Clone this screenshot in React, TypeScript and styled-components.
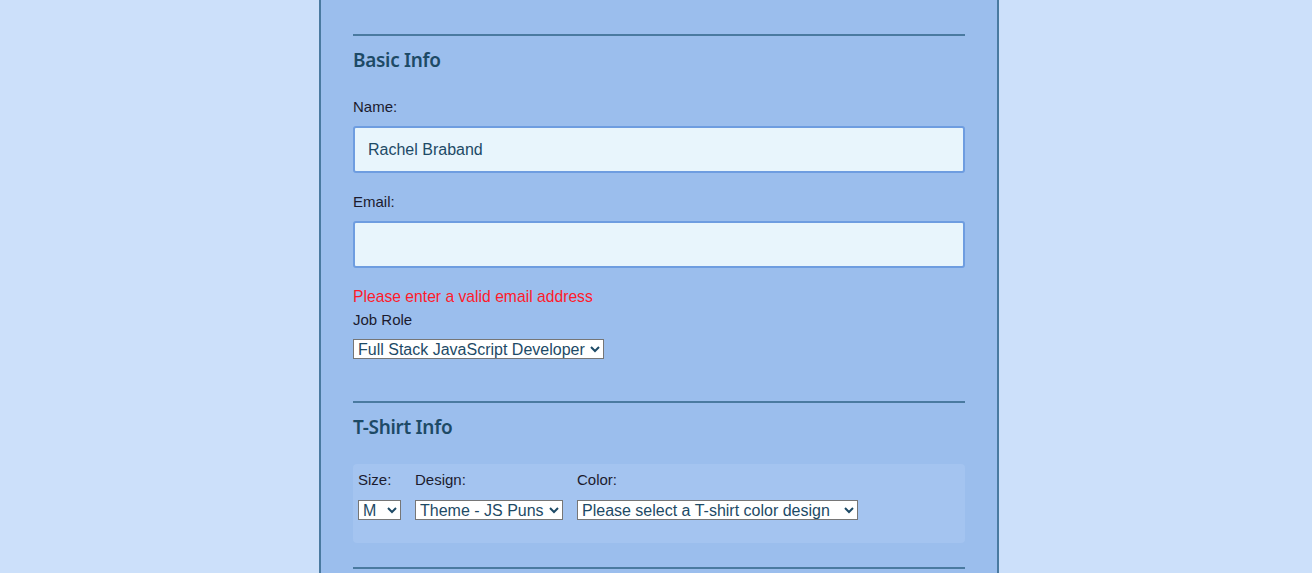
import styled, { createGlobalStyle } from 'styled-components';

const Global = createGlobalStyle`
  html, body {
    margin: 0;
    padding: 0;
    background: #cce0fa;
    height: 100%;
    overflow: hidden;
  }
`;

const Page = styled.div`
  height: 573px;
  overflow: hidden;
`;

const Form = styled.form`
  width: 612px;
  margin-left: 319px;
  padding: 34px 32px 0;
  min-height: 573px;
  background: #9bbeed;
  border-left: 2px solid #4a7aa0;
  border-right: 2px solid #4a7aa0;
  font-family: 'Liberation Sans', Arial, sans-serif;
  color: #1b1b2e;
`;

const Fieldset = styled.fieldset<{ $gap?: number }>`
  margin: 0 0 ${p => p.$gap ?? 33}px;
  padding: 0;
  border: none;
  border-top: 2px solid #4a7aa0;
  min-width: 0;
`;

const Legend = styled.h2`
  margin: 12px 0 26px;
  font-family: 'Noto Sans', 'Open Sans', sans-serif;
  font-size: 19px;
  font-weight: 600;
  color: #1d4a66;
  line-height: 24px;
  letter-spacing: -0.3px;
`;

const Label = styled.label`
  display: block;
  font-size: 15px;
  line-height: 18px;
  margin-bottom: 10px;
`;

const TextInput = styled.input`
  display: block;
  box-sizing: border-box;
  width: 100%;
  height: 47px;
  margin: 0 0 20px;
  padding: 0 13px;
  border: 2px solid #6e9de0;
  border-radius: 3px;
  background: #e8f5fc;
  font-family: 'Liberation Sans', Arial, sans-serif;
  font-size: 16px;
  color: #1d4a66;
  outline: none;
`;

const ErrorText = styled.p`
  margin: 0 0 5px;
  font-size: 15.7px;
  line-height: 18px;
  color: #ff1a2a;
`;

const Select = styled.select<{ $width?: number }>`
  box-sizing: border-box;
  height: 20px;
  ${p => (p.$width ? `width: ${p.$width}px;` : '')}
  font-family: 'Liberation Sans', Arial, sans-serif;
  font-size: 16px;
  color: #1d4a66;
  background: #fff;
  border: 1px solid #767676;
  border-radius: 0;
  padding: 0;
`;

const JobBlock = styled.div`
  padding-bottom: 9px;
`;

const ShirtBox = styled.div`
  display: flex;
  gap: 14px;
  margin-top: -1px;
  padding: 7px 5px 23px;
  background: #a4c4f0;
  border-radius: 4px;
`;

const ShirtCol = styled.div`
  display: flex;
  flex-direction: column;
`;

const ShirtLabel = styled.label`
  font-size: 15px;
  line-height: 18px;
  margin-bottom: 11px;
`;

export default function App() {
  return (
    <Page>
      <Global />
      <Form>
        <Fieldset>
          <Legend>Basic Info</Legend>
          <Label htmlFor="name">Name:</Label>
          <TextInput id="name" type="text" defaultValue="Rachel Braband" />
          <Label htmlFor="mail">Email:</Label>
          <TextInput id="mail" type="email" defaultValue="" />
          <ErrorText>Please enter a valid email address</ErrorText>
          <JobBlock>
            <Label htmlFor="title">Job Role</Label>
            <Select id="title" defaultValue="fs" $width={251}>
              <option value="fs">Full Stack JavaScript Developer</option>
              <option value="fe">Front End Developer</option>
              <option value="be">Back End Developer</option>
            </Select>
          </JobBlock>
        </Fieldset>
        <Fieldset $gap={24}>
          <Legend>T-Shirt Info</Legend>
          <ShirtBox>
            <ShirtCol>
              <ShirtLabel htmlFor="size">Size:</ShirtLabel>
              <Select id="size" defaultValue="m" $width={43}>
                <option value="s">S</option>
                <option value="m">M</option>
                <option value="l">L</option>
                <option value="xl">XL</option>
              </Select>
            </ShirtCol>
            <ShirtCol>
              <ShirtLabel htmlFor="design">Design:</ShirtLabel>
              <Select id="design" defaultValue="js puns" $width={148}>
                <option value="js puns">Theme - JS Puns</option>
                <option value="heart js">Theme - I ♥ JS</option>
              </Select>
            </ShirtCol>
            <ShirtCol>
              <ShirtLabel htmlFor="color">Color:</ShirtLabel>
              <Select id="color" defaultValue="none" $width={281}>
                <option value="none">Please select a T-shirt color design</option>
                <option value="cornflowerblue">Cornflower Blue</option>
              </Select>
            </ShirtCol>
          </ShirtBox>
        </Fieldset>
        <Fieldset />
      </Form>
    </Page>
  );
}
